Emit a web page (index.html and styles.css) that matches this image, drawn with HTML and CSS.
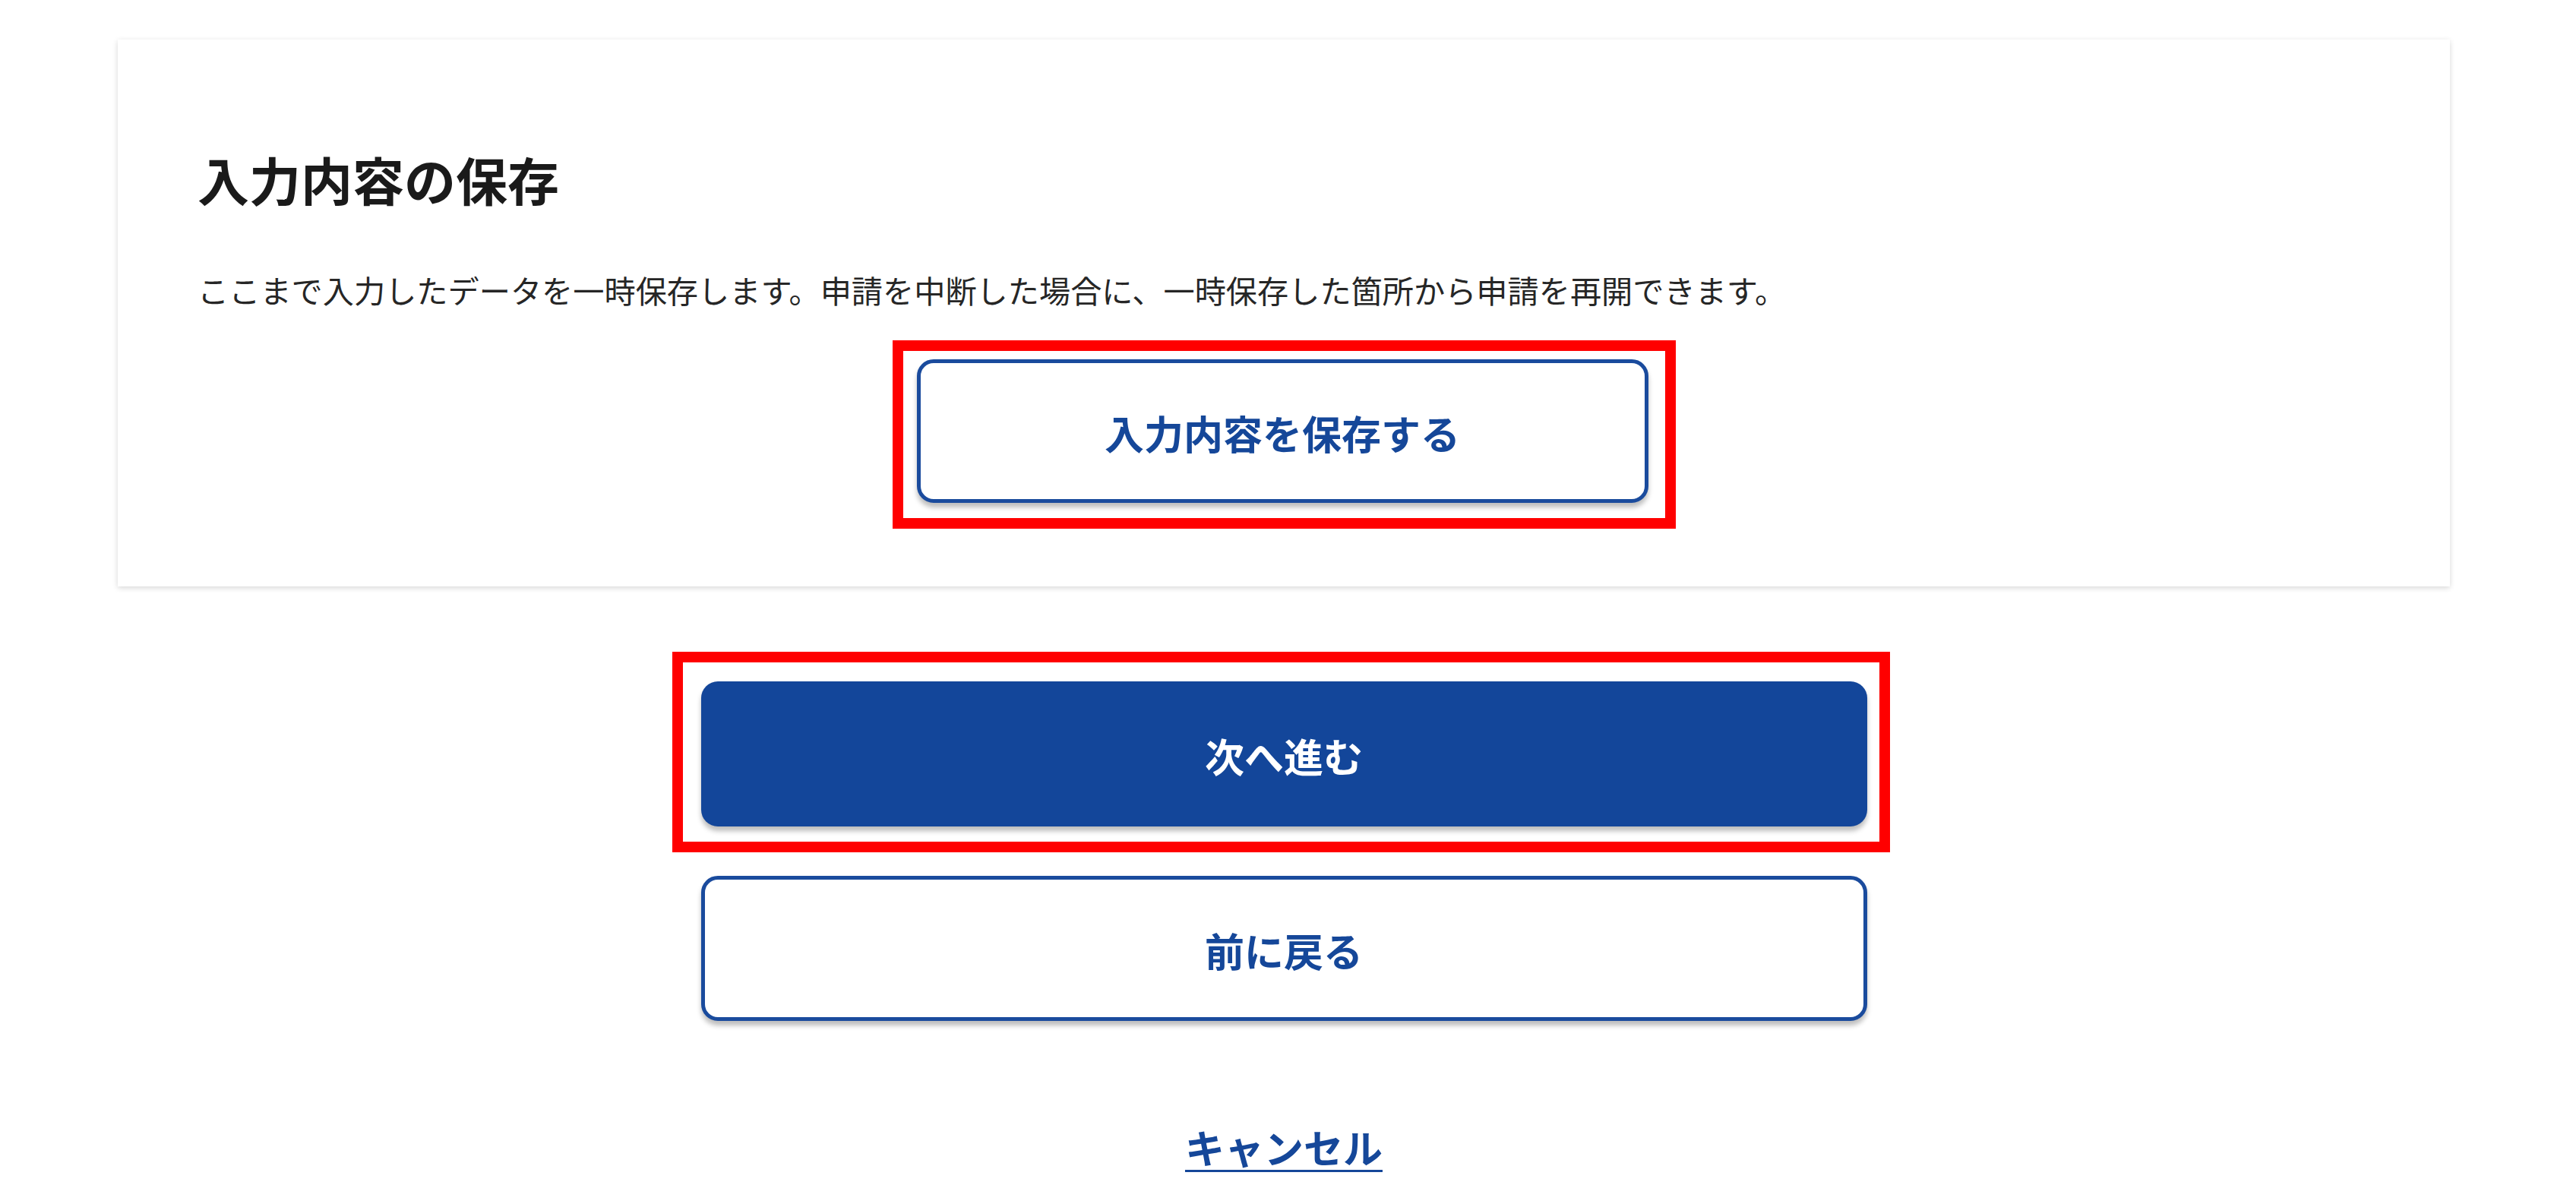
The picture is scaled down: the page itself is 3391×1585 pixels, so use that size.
FILE: index.html
```html
<!DOCTYPE html>
<html lang="ja">
<head>
<meta charset="utf-8">
<title>入力内容の保存</title>
<link rel="stylesheet" href="styles.css">
</head>
<body>
<main class="page">
  <section class="card">
    <h2 class="card-title">入力内容の保存</h2>
    <p class="card-text">ここまで入力したデータを一時保存します。申請を中断した場合に、一時保存した箇所から申請を再開できます。</p>
    <div class="card-actions">
      <div class="highlight highlight-save">
        <button class="btn btn-outline btn-save" type="button">入力内容を保存する</button>
      </div>
    </div>
  </section>

  <div class="actions">
    <div class="actions-col">
      <div class="highlight highlight-next">
        <button class="btn btn-primary" type="button">次へ進む</button>
      </div>
      <button class="btn btn-outline btn-back" type="button">前に戻る</button>
      <a class="cancel-link" href="#">キャンセル</a>
    </div>
  </div>
</main>
</body>
</html>
```

FILE: styles.css
```css
* {
  box-sizing: border-box;
}

html, body {
  margin: 0;
  padding: 0;
  background: #ffffff;
}

body {
  width: 3391px;
  height: 1585px;
  overflow: hidden;
  font-family: "Noto Sans CJK JP", "Noto Sans", sans-serif;
  color: #1a1a1a;
}

.page {
  padding-top: 52px;
  padding-left: 155px;
  width: 3225px;
}

.card {
  width: 3070px;
  height: 720px;
  background: #ffffff;
  box-shadow: 0 2px 7px rgba(0, 0, 0, 0.16);
  padding: 150px 105px 0 105px;
  display: flex;
  flex-direction: column;
}

.card-title {
  margin: 0;
  font-size: 68px;
  line-height: 1;
  font-weight: 700;
  color: #1a1a1a;
}

.card-text {
  margin: 91px 0 0 0;
  font-size: 41.2px;
  line-height: 1;
  font-weight: 400;
  color: #262626;
  white-space: nowrap;
}

.card-actions {
  margin-top: 46px;
  display: flex;
  justify-content: center;
}

.highlight {
  border: 14px solid #ff0000;
}

.highlight-save {
  padding: 11px 22px 20px 18px;
}

.highlight-next {
  padding: 25px 16px 20px 24px;
  margin: 0 -30px 0 -38px;
}

.btn {
  display: flex;
  align-items: center;
  justify-content: center;
  font-family: "Noto Sans CJK JP", "Noto Sans", sans-serif;
  font-size: 52px;
  font-weight: 700;
  line-height: 1;
  border-radius: 22px;
  cursor: pointer;
  box-shadow: 0 6px 6px rgba(0, 0, 0, 0.26);
  padding: 5px 0 0 0;
}

.btn-outline {
  background: #ffffff;
  color: #154799;
  border: 5px solid #1a4b9d;
}

.btn-save {
  width: 963px;
  height: 189px;
}

.actions {
  margin-top: 86px;
  width: 3070px;
  display: flex;
  justify-content: center;
}

.actions-col {
  width: 1535px;
  display: flex;
  flex-direction: column;
  align-items: stretch;
}

.btn-primary {
  width: 100%;
  height: 191px;
  background: #13469a;
  color: #ffffff;
  border: none;
}

.btn-back {
  margin-top: 31px;
  width: 100%;
  height: 191px;
}

.cancel-link {
  align-self: center;
  margin-top: 140px;
  font-size: 52px;
  line-height: 1;
  font-weight: 700;
  color: #154799;
  text-decoration: underline;
  text-decoration-thickness: 3px;
  text-underline-offset: 8px;
}
```
